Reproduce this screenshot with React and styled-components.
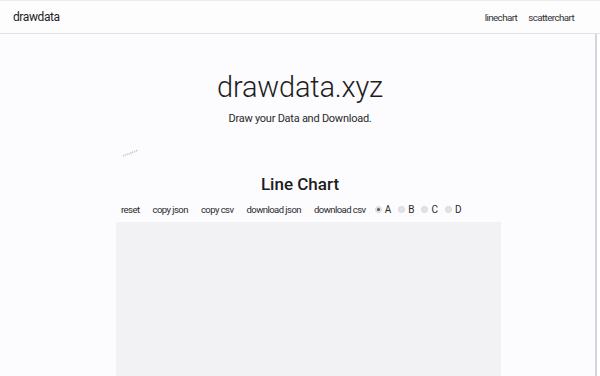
import React from "react";
import styled, { createGlobalStyle } from "styled-components";

const Global = createGlobalStyle`
  html, body { margin: 0; padding: 0; background: #fcfbfd; }
  body { font-family: Roboto, "Liberation Sans", sans-serif; color: #222; }
`;

const Page = styled.div`
  width: 600px;
  height: 376px;
  overflow: hidden;
  display: flex;
  flex-direction: column;
  box-shadow: inset -3px 0 0 #ffffff, inset -5px 0 0 #d6d6da;
`;

const Nav = styled.nav`
  height: 34px;
  flex: none;
  display: flex;
  align-items: center;
  justify-content: space-between;
  padding: 0 26px 0 13px;
  border-bottom: 1px solid #e2e1e4;
  border-top: 1px solid #ececee;
  box-sizing: border-box;
  background: #fdfdfe;
`;

const Brand = styled.span`
  font-size: 12px;
  letter-spacing: -0.4px;
  color: #222;
`;

const NavLinks = styled.div`
  display: flex;
  gap: 11px;
`;

const NavLink = styled.span`
  font-size: 9.8px;
  letter-spacing: -0.6px;
  color: #333;
`;

const Hero = styled.header`
  display: flex;
  flex-direction: column;
  align-items: center;
  padding-top: 34px;
`;

const Title = styled.h1`
  margin: 0;
  font-size: 29px;
  font-weight: 300;
  line-height: 38px;
  color: #1e1e1e;
  letter-spacing: -0.2px;
`;

const Subtitle = styled.p`
  margin: 6px 0 0;
  font-size: 11px;
  letter-spacing: -0.25px;
  color: #2a2a2a;
`;

const Scribble = styled.div`
  height: 42px;
  padding-left: 122px;
  padding-top: 18px;
  box-sizing: border-box;
`;

const ChartSection = styled.section`
  display: flex;
  flex-direction: column;
  align-items: center;
  flex: 1;
`;

const SectionTitle = styled.h2`
  margin: 5px 0 0;
  font-size: 17px;
  font-weight: 500;
  line-height: 24px;
  color: #1c1c1c;
`;

const Toolbar = styled.div`
  display: flex;
  align-items: center;
  align-self: flex-start;
  margin-left: 121px;
  margin-top: 5px;
  height: 16px;
`;

const ActionButton = styled.span`
  font-size: 9.5px;
  letter-spacing: -0.55px;
  color: #2a2a2a;
  margin-right: 13px;
  &:last-of-type { margin-right: 9px; }
`;

const RadioLabel = styled.label`
  display: flex;
  align-items: center;
  gap: 3px;
  font-size: 10px;
  color: #2a2a2a;
  margin-right: 7px;
`;

const RadioDot = styled.span`
  width: 7px;
  height: 7px;
  border-radius: 50%;
  box-sizing: border-box;
  background: #e3e3e6;
  border: 1px solid #d6d6da;
  display: flex;
  align-items: center;
  justify-content: center;
  &::after {
    content: "";
    width: 3px;
    height: 3px;
    border-radius: 50%;
    background: ${(p) => (p.$checked ? "#555" : "transparent")};
  }
`;

const Canvas = styled.div`
  align-self: flex-start;
  margin-left: 116px;
  margin-top: 5px;
  width: 385px;
  flex: 1;
  background: #f2f1f4;
`;

export default function App() {
  const actions = ["reset", "copy json", "copy csv", "download json", "download csv"];
  const series = ["A", "B", "C", "D"];
  return (
    <Page>
      <Global />
      <Nav>
        <Brand>drawdata</Brand>
        <NavLinks>
          <NavLink>linechart</NavLink>
          <NavLink>scatterchart</NavLink>
        </NavLinks>
      </Nav>
      <Hero>
        <Title>drawdata.xyz</Title>
        <Subtitle>Draw your Data and Download.</Subtitle>
      </Hero>
      <Scribble>
        <svg width="18" height="10" viewBox="0 0 18 10">
          <path d="M1 8 L4 6.5 L7 6 L10 4.5 L13 3.5 L16 2" stroke="#bdbcc2" strokeWidth="1.6" strokeDasharray="1 1" fill="none" />
        </svg>
      </Scribble>
      <ChartSection>
        <SectionTitle>Line Chart</SectionTitle>
        <Toolbar>
          {actions.map((a) => (
            <ActionButton key={a}>{a}</ActionButton>
          ))}
          {series.map((s, i) => (
            <RadioLabel key={s}>
              <RadioDot $checked={i === 0} />
              {s}
            </RadioLabel>
          ))}
        </Toolbar>
        <Canvas />
      </ChartSection>
    </Page>
  );
}
